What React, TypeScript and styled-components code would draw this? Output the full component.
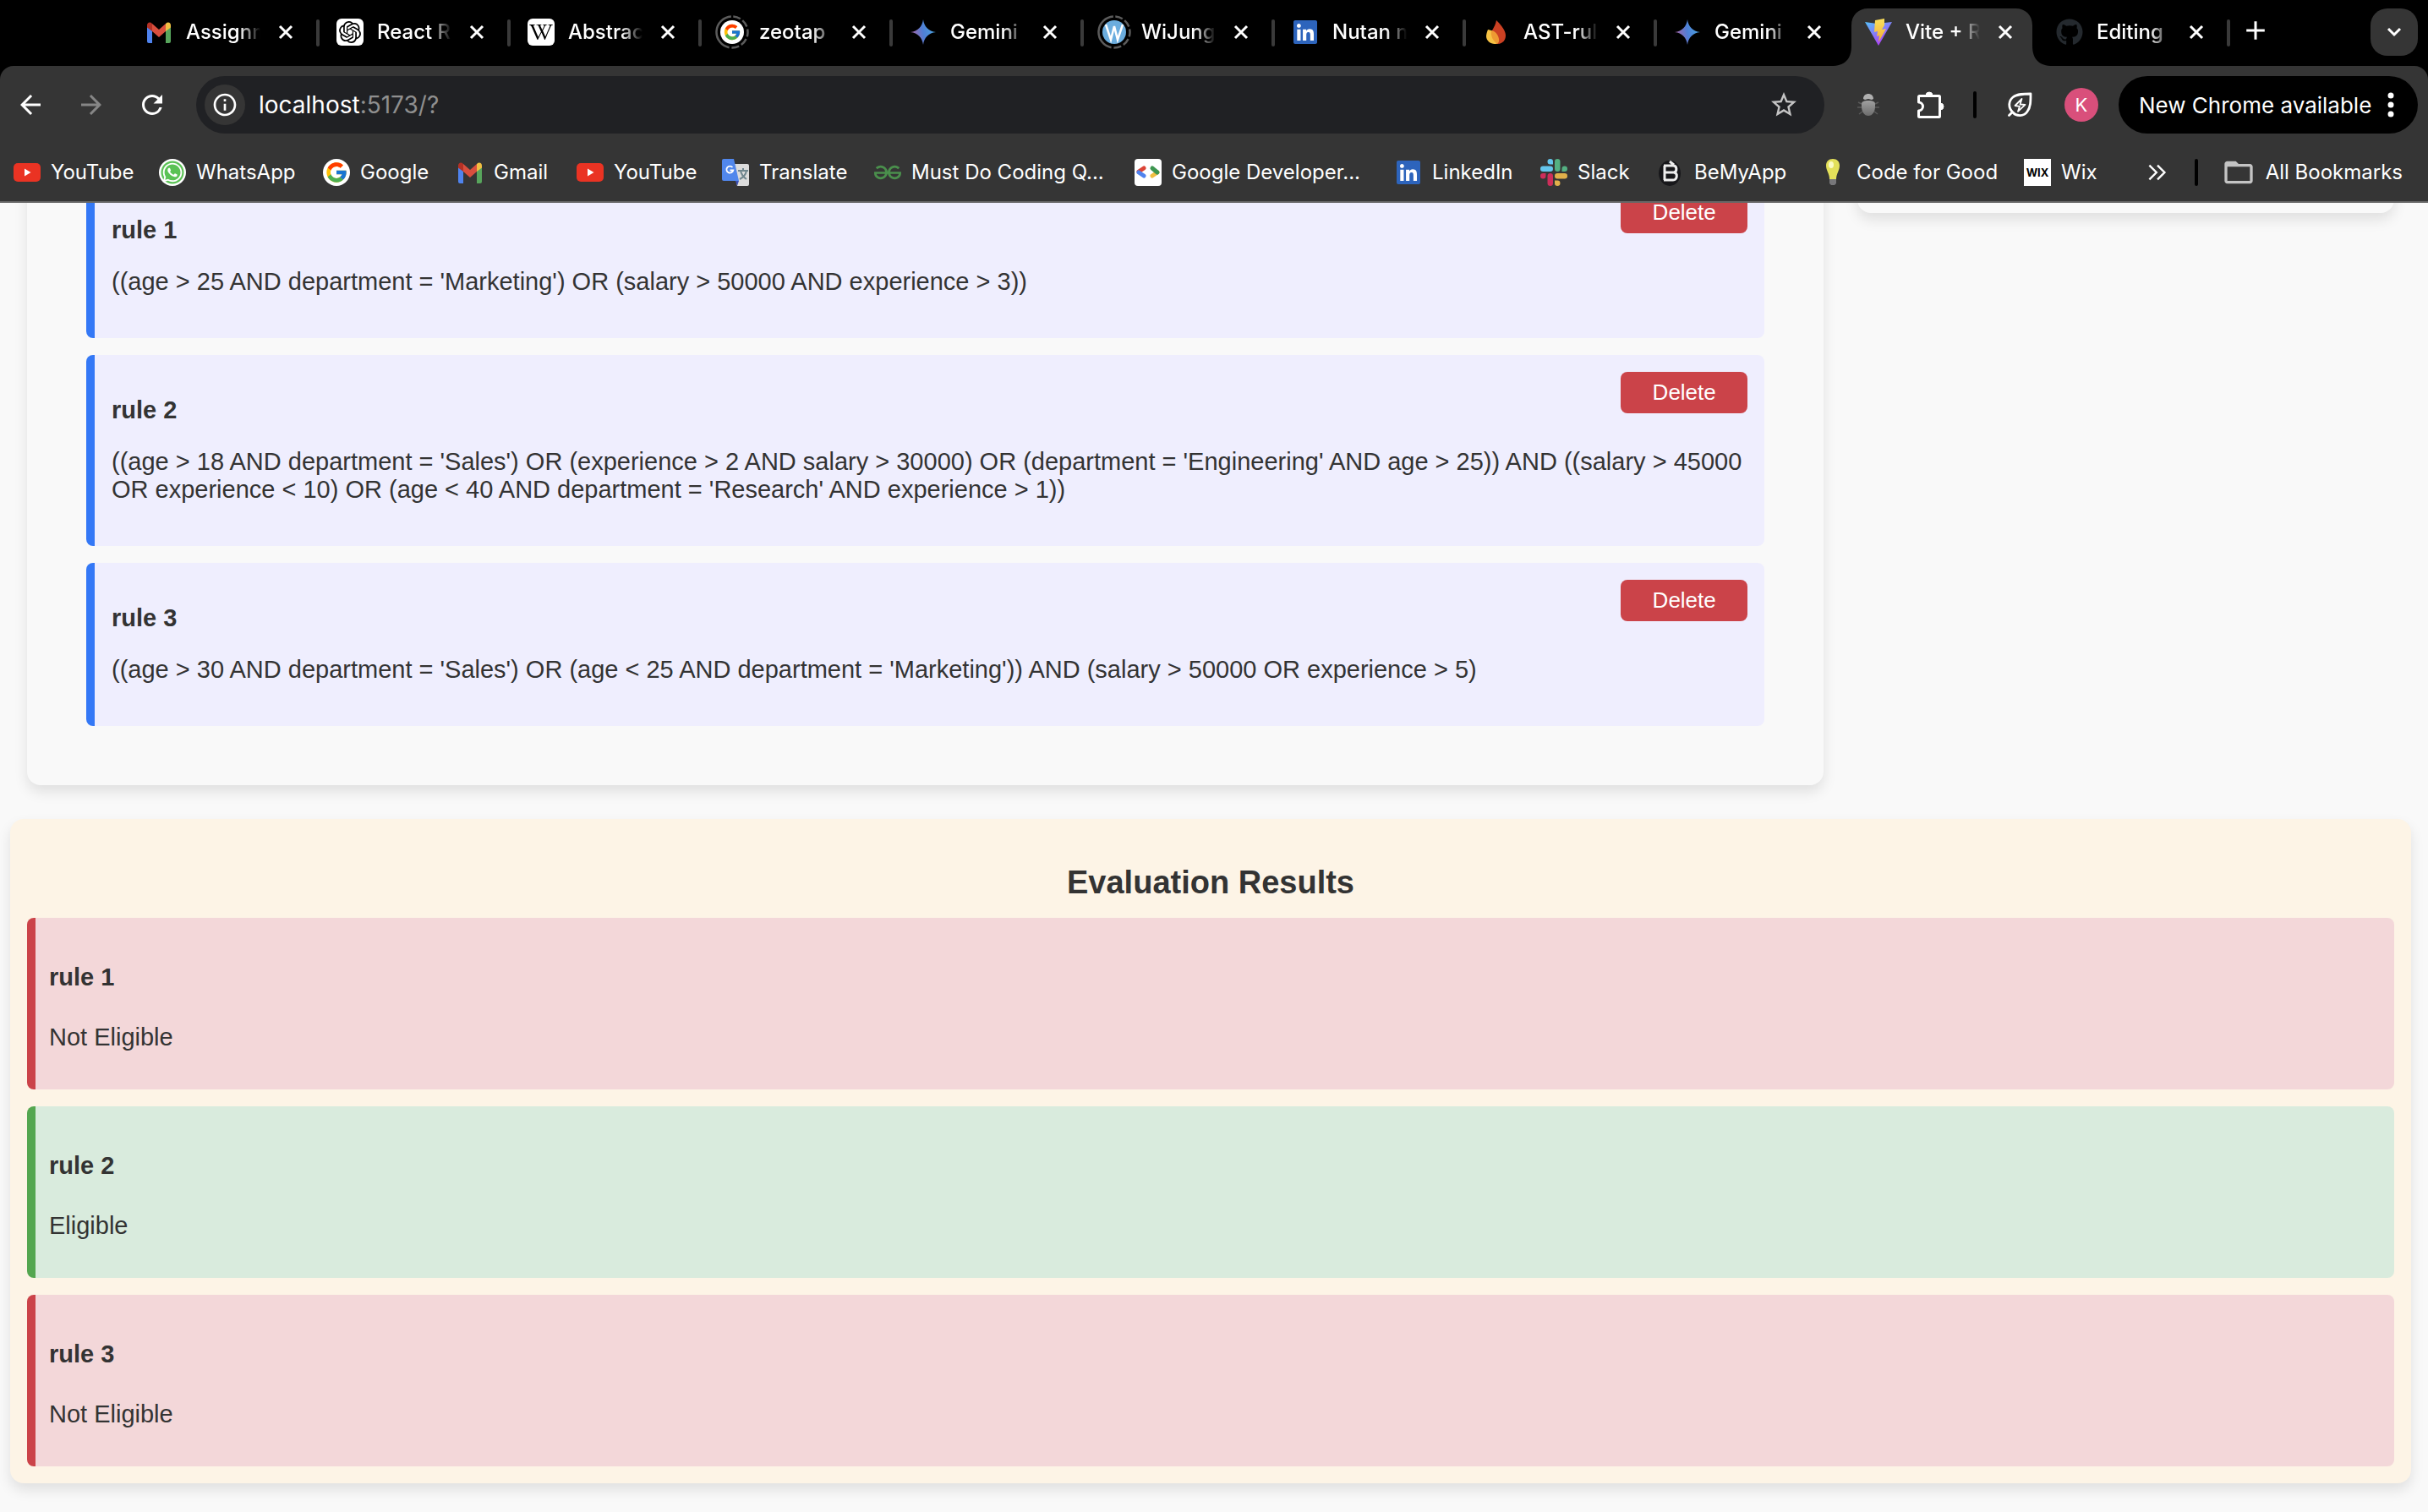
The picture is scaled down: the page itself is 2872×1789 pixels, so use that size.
import React, { useLayoutEffect, useRef } from "react";
import styled, { createGlobalStyle, css } from "styled-components";
import { FcGoogle } from "react-icons/fc";
import { SiOpenai, SiGeeksforgeeks } from "react-icons/si";
import { FaWikipediaW, FaLinkedin, FaGithub, FaWhatsapp } from "react-icons/fa";
import { MdStarBorder, MdRefresh, MdArrowBack, MdArrowForward, MdInfoOutline, MdFolderOpen } from "react-icons/md";

const UI = `Inter, "Liberation Sans", sans-serif`;
const PAGE = `"Liberation Sans", Arial, sans-serif`;

const Global = createGlobalStyle`
  *, *::before, *::after { box-sizing: border-box; }
  body { margin: 0; background: #f9f9f9; }
  button { border: 0; padding: 0; background: none; color: inherit; font: inherit; cursor: pointer; }
  h2, h3, p, ul { margin: 0; padding: 0; }
  svg { display: block; flex: none; }
`;

const Window = styled.div`
  display: flex;
  flex-direction: column;
  height: 100vh;
`;

/* ---------- browser frame ---------- */

const Frame = styled.header`
  flex: none;
  background: #000;
  color: #fff;
  font-family: ${UI};
  font-size: 24px;
  font-weight: 400;
`;

const TabStrip = styled.nav`
  display: flex;
  height: 78px;
  padding: 10px 12px 0 150px;
`;

const TabItem = styled.div<{ $line?: boolean }>`
  position: relative;
  display: flex;
  align-items: center;
  flex: 0 1 226px;
  min-width: 0;
  height: 68px;
  padding: 0 22px 12px;
  ${(p) =>
    p.$line &&
    css`
      &::after {
        content: "";
        position: absolute;
        right: -2px;
        top: 13px;
        width: 4px;
        height: 32px;
        border-radius: 2px;
        background: #3a3a3a;
      }
    `}
`;

const ActiveShape = styled.svg`
  position: absolute;
  left: -18px;
  top: 0;
  width: calc(100% + 36px);
  height: 68px;
`;

const TabLink = styled.a`
  position: relative;
  display: flex;
  align-items: center;
  gap: 16px;
  flex: 1;
  min-width: 0;
  color: inherit;
  font-weight: 500;
  text-decoration: none;
`;

const TabTitle = styled.span`
  width: 88px;
  overflow: hidden;
  white-space: nowrap;
  line-height: 32px;
  mask-image: linear-gradient(to right, #000 72%, transparent);
`;

const Cross = styled.button`
  position: relative;
  display: grid;
  place-items: center;
  width: 32px;
  height: 32px;
`;

const NewTab = styled.button`
  display: grid;
  place-items: center;
  width: 64px;
  height: 52px;
`;

const TabSearch = styled.button`
  display: grid;
  place-items: center;
  width: 56px;
  height: 56px;
  margin-left: auto;
  border-radius: 20px;
  background: #353535;
`;

const Toolbar = styled.div`
  background: #353535;
  border-bottom: 2px solid #666;
  border-radius: 16px 16px 0 0;
`;

const AddressRow = styled.div`
  display: flex;
  align-items: center;
  padding: 12px 12px 12px 0;
`;

const NavButton = styled.button<{ $dim?: boolean }>`
  display: grid;
  place-items: center;
  width: 72px;
  height: 56px;
  color: ${(p) => (p.$dim ? "#868686" : "#fff")};
`;

const Omnibox = styled.div`
  position: relative;
  display: flex;
  align-items: center;
  flex: 1;
  height: 68px;
  margin-left: 16px;
  padding: 0 30px 0 10px;
  border-radius: 34px;
  background: #202124;
`;

const SiteInfo = styled.button`
  display: grid;
  place-items: center;
  width: 48px;
  height: 48px;
  margin-right: 16px;
  border-radius: 24px;
  background: #353535;
`;

const Url = styled.a`
  flex: 1;
  color: #8f8f8f;
  font-size: 28px;
  line-height: 32px;
  text-decoration: none;
  b { color: #fff; font-weight: 400; }
`;

const Star = styled.button`
  color: #c4c4c4;
`;

const Tools = styled.div`
  display: flex;
  align-items: center;
  padding: 0 24px 0 28px;
`;

const ToolButton = styled.button<{ $w: number }>`
  display: grid;
  place-items: center;
  width: ${(p) => p.$w}px;
  height: 48px;
`;

const Bar = styled.span`
  flex: none;
  width: 4px;
  height: 32px;
  border-radius: 2px;
  background: #000;
`;

const Avatar = styled.button`
  width: 40px;
  height: 40px;
  border-radius: 20px;
  background: #d94f7b;
  font-size: 22px;
`;

const UpdatePill = styled.button`
  display: flex;
  align-items: center;
  justify-content: space-between;
  width: 354px;
  height: 68px;
  padding: 0 28px 0 24px;
  border-radius: 34px;
  background: #000;
  font-size: 26px;
  white-space: nowrap;
`;

const BookmarkBar = styled.nav`
  display: flex;
  align-items: center;
  height: 68px;
  padding: 0 30px 0 16px;
`;

const Bookmark = styled.a<{ $w?: number }>`
  display: flex;
  align-items: center;
  gap: 12px;
  flex: ${(p) => (p.$w ? `0 1 ${p.$w}px` : "none")};
  color: inherit;
  text-decoration: none;
  white-space: nowrap;
  line-height: 32px;
`;

const Overflow = styled.button`
  display: grid;
  place-items: center;
  width: 48px;
  height: 48px;
  margin: 0 20px 0 auto;
`;

const AllBookmarks = styled(Bookmark)`
  margin-left: 28px;
`;

const Tile = styled.span<{ $bg: string; $fg: string; $r?: number; $size?: number }>`
  display: grid;
  place-items: center;
  flex: none;
  width: 32px;
  height: 32px;
  border-radius: ${(p) => p.$r ?? 6}px;
  background: ${(p) => p.$bg};
  color: ${(p) => p.$fg};
  font-size: ${(p) => p.$size ?? 14}px;
  font-weight: 700;
`;

const LinkedInMark = styled(FaLinkedin)`
  width: 32px;
  height: 32px;
  color: #2d64bc;
  background: linear-gradient(#fff, #fff) center / 22px 22px no-repeat;
`;

const RingSvg = styled.svg`
  margin: 0 -4px;
`;

/* ---------- rule engine page ---------- */

const Viewport = styled.main`
  flex: 1;
  min-height: 0;
  overflow-y: auto;
  scrollbar-width: none;
  padding: 40px 20px 34px 12px;
  background: #f9f9f9;
  color: #333;
  font-family: ${PAGE};
  font-size: 29px;
  line-height: 33px;
`;

const Columns = styled.div`
  display: grid;
  grid-template-columns: 77fr 23fr;
  align-items: start;
  gap: 40px;
  padding: 0 20px;
  margin-bottom: 40px;
`;

const panel = css`
  border-radius: 16px;
  box-shadow: 0 8px 16px rgba(0, 0, 0, 0.1);
`;

const RulesPanel = styled.section`
  ${panel}
  display: grid;
  gap: 20px;
  padding: 70px;
`;

const SidePanel = styled.aside`
  ${panel}
  height: 115px;
`;

const RuleCard = styled.article`
  padding: 20px 20px 50px;
  border-left: 10px solid #3478f6;
  border-radius: 8px;
  background: #efeefe;
`;

const RuleHead = styled.div`
  display: flex;
  align-items: flex-start;
  justify-content: space-between;
`;

const RuleName = styled.h3`
  padding: 29px 0 28px;
  font-size: 29px;
  line-height: 33px;
`;

const DeleteButton = styled.button`
  width: 150px;
  height: 49px;
  border-radius: 8px;
  background: #cb4349;
  color: #fff;
  font-size: 26px;
`;

const Results = styled.section`
  ${panel}
  display: grid;
  gap: 20px;
  padding: 20px;
  background: #fdf4e6;
`;

const ResultsTitle = styled.h2`
  padding-top: 33px;
  font-size: 38px;
  line-height: 44px;
  text-align: center;
`;

const ResultCard = styled.article<{ $ok: boolean }>`
  padding: 54px 16px 45px;
  border-left: 10px solid ${(p) => (p.$ok ? "#54a650" : "#cb4349")};
  border-radius: 8px;
  background: ${(p) => (p.$ok ? "#d9ebdd" : "#f3d7d9")};
`;

const ResultName = styled.h3`
  padding-bottom: 38px;
  font-size: 29px;
  line-height: 33px;
`;

/* ---------- drawings ---------- */

const Gmail = () => (
  <svg width="32" height="32" viewBox="0 0 32 32">
    <path d="M2 8v19a2 2 0 0 0 2 2h4V14z" fill="#4f83ee" />
    <path d="M30 8v19a2 2 0 0 1-2 2h-4V14z" fill="#58a55c" />
    <path d="M24 6v9l6-4.500V8c0-3.500-3.500-4.500-6-2z" fill="#f1bf42" />
    <path d="M8 6v9l-6-4.500V8c0-3.500 3.500-4.500 6-2z" fill="#b43125" />
    <path d="M8 6l8 7 8-7v9l-8 7-8-7z" fill="#d94f3e" />
  </svg>
);

const YouTube = () => (
  <svg width="32" height="32" viewBox="0 0 32 32">
    <rect y="5" width="32" height="22" rx="5" fill="#ea3323" />
    <path d="M13 11.500v9l7.500-4.500z" fill="#fff" />
  </svg>
);

const Gemini = () => (
  <svg width="32" height="32" viewBox="0 0 32 32">
    <defs>
      <linearGradient id="gem" x1="0" y1="0.600" x2="1" y2="0.400">
        <stop offset="0.1" stopColor="#9a68ad" />
        <stop offset="0.5" stopColor="#4f7fd6" />
        <stop offset="1" stopColor="#4aa6e0" />
      </linearGradient>
    </defs>
    <path d="M16 1c1 8.500 6.500 14 15 15-8.500 1-14 6.500-15 15-1-8.500-6.500-14-15-15 8.500-1 14-6.500 15-15z" fill="url(#gem)" />
  </svg>
);

const Vite = () => (
  <svg width="32" height="32" viewBox="0 0 32 32">
    <defs>
      <linearGradient id="vp" x1="0" y1="0" x2="0.6" y2="1">
        <stop stopColor="#54c2fb" />
        <stop offset="1" stopColor="#b13bf7" />
      </linearGradient>
      <linearGradient id="vy" x1="0" y1="0" x2="0" y2="1">
        <stop stopColor="#fbe05c" />
        <stop offset="1" stopColor="#f3ab35" />
      </linearGradient>
    </defs>
    <path d="M0 4l14 2 18-2-16 28z" fill="url(#vp)" />
    <path d="M23 0L12 2l-1 14 4-1-1 6 3-1-1 8 9-16-5 1 3-5z" fill="url(#vy)" />
  </svg>
);

const Flame = () => (
  <svg width="32" height="32" viewBox="0 0 32 32">
    <path d="M16 2c7 7 11 13 11 18 0 6-4 10-10 10s-8-4-8-9c0-7 5-9 7-19z" fill="#cb4123" />
    <path d="M6 13c6 1 11 5 12 11 .500 4-1 6-4 6-5 0-10-4-10-9 0-3 1-5 2-8z" fill="#f6c244" />
    <path d="M10 14c5 1 8 5 9 10 .500 4-1 5-2 6-5-4-8-9-7-16z" fill="#ee9a33" />
  </svg>
);

const Ringed = ({ children }: { children: React.ReactNode }) => (
  <RingSvg width="40" height="40" viewBox="0 0 40 40">
    <circle cx="20" cy="20" r="18.500" fill="none" stroke="#5b5b5b" strokeWidth="2.500" strokeDasharray="9 3 9 3 9 3 9 3 9 3 53 3" transform="rotate(-86 20 20)" />
    {children}
  </RingSvg>
);

const Translate = () => (
  <svg width="32" height="32" viewBox="0 0 32 32">
    <path d="M12 6h18a2 2 0 0 1 2 2v22a2 2 0 0 1-2 2H18z" fill="#dcdcdc" />
    <path d="M19 14h12M25 11v3M22 14c1 5 4 8 7 10M29 14c-1 5-4 8-8 10" fill="none" stroke="#70878f" strokeWidth="2" />
    <path d="M2 0h12l6 26H2a2 2 0 0 1-2-2V2a2 2 0 0 1 2-2z" fill="#5187ec" />
    <path d="M16 26h4l-2 6z" fill="#3c50b5" />
    <path d="M12.500 10a4 4 0 1 0 .8 3.500H9.500" fill="none" stroke="#fff" strokeWidth="1.800" />
  </svg>
);

const GoogleDev = () => (
  <svg width="32" height="32" viewBox="0 0 32 32">
    <rect width="32" height="32" rx="4" fill="#fff" />
    <g strokeWidth="5" fill="none" strokeLinecap="round">
      <path d="M11 11l-6 4" stroke="#db4437" />
      <path d="M5 16l6 4" stroke="#4f83ee" />
      <path d="M21 20l6-4" stroke="#f1bf42" />
      <path d="M21 11l6 5" stroke="#3d9550" />
    </g>
  </svg>
);

const Slack = () => (
  <svg width="32" height="32" viewBox="0 0 32 32">
    <g fill="#64c5ec">
      <rect x="0" y="8.500" width="15" height="6.500" rx="3.250" />
      <path d="M15 6.500h-3.200A3.250 3.250 0 1 1 15 3.250z" />
    </g>
    <g fill="#54b082">
      <rect x="17" y="0" width="6.500" height="15" rx="3.250" />
      <path d="M25.500 15v-3.200A3.250 3.250 0 1 1 28.750 15z" />
    </g>
    <g fill="#e0b04a">
      <rect x="17" y="17" width="15" height="6.500" rx="3.250" />
      <path d="M17 25.500h3.200A3.250 3.250 0 1 1 17 28.750z" />
    </g>
    <g fill="#cd2e5a">
      <rect x="8.500" y="17" width="6.500" height="15" rx="3.250" />
      <path d="M6.500 17v3.200A3.250 3.250 0 1 1 3.250 17z" />
    </g>
  </svg>
);

const BeMy = () => (
  <svg width="32" height="32" viewBox="0 0 32 32">
    <ellipse cx="15" cy="17" rx="13" ry="15" fill="#17171a" />
    <path d="M8 8h11c5 0 5 7 1 8 5 1 4 9-1 9H8M9 8v17M9 16h12M15 3l5 4" fill="none" stroke="#eee" strokeWidth="3" />
  </svg>
);

const Bulb = () => (
  <svg width="32" height="32" viewBox="0 0 32 32">
    <path d="M16 0c5 0 8 3 8 8 0 6-4 9-4 16h-8c0-7-4-10-4-16 0-5 3-8 8-8z" fill="#e3e05a" />
    <ellipse cx="14" cy="7" rx="3" ry="4" fill="#fbfbc4" />
    <path d="M12 24h8v5l-2 2h-4l-2-2z" fill="#77777a" />
  </svg>
);

const Bug = () => (
  <svg width="32" height="32" viewBox="0 0 32 32">
    <defs>
      <linearGradient id="bug" x1="0" y1="0" x2="0" y2="1">
        <stop stopColor="#a0a0a0" />
        <stop offset="1" stopColor="#6c6c6c" />
      </linearGradient>
    </defs>
    <path d="M8 15l-4-2M24 15l4-2M8 19H3M24 19h5M9 24l-4 3M23 24l4 3" fill="none" stroke="#5a5a5a" strokeWidth="1.500" />
    <path d="M10 9c0-4 3-6 6-6s6 2 6 6l-2 1-4-1-4 1z" fill="#b0b0b0" />
    <path d="M8 15c0-3 3-4 8-4s8 1 8 4v3c0 6-3 11-8 11s-8-5-8-11z" fill="url(#bug)" />
  </svg>
);

const Puzzle = () => (
  <svg width="32" height="32" viewBox="0 0 32 32">
    <path
      d="M3 5.500h22.500a1 1 0 0 1 1 1v23a1 1 0 0 1-1 1H2.500a1 1 0 0 1-1-1v-6.500a5 5 0 0 0 0-10V6.500a1 1 0 0 1 1-1z"
      fill="none"
      stroke="#fff"
      strokeWidth="3"
      strokeLinejoin="round"
    />
    <path d="M10 5a4 4 0 0 1 8 0zM27 14a4 4 0 0 1 0 8z" fill="#fff" stroke="#fff" />
  </svg>
);

const Leaf = () => (
  <svg width="30" height="30" viewBox="0 0 30 30" fill="none" stroke="#fff" strokeLinejoin="round" strokeLinecap="round">
    <path d="M5.500 23.500C0 18 1 10 6 6c5-4 13-4 21-4 0 9 0 16-4 21-4 6-13 6-17.500 .5zM5.500 23.500l-4 4" strokeWidth="2.800" />
    <path d="M8.500 16l8-8-2 6.500 6 .3-8.500 8 2-6z" strokeWidth="1.800" />
  </svg>
);

const Stroke = ({ d, size = 20, w = 3 }: { d: string; size?: number; w?: number }) => (
  <svg width={size} height={size} viewBox="0 0 20 20" fill="none" stroke="currentColor" strokeWidth={w}>
    <path d={d} />
  </svg>
);

const Kebab = () => (
  <svg width="8" height="30" viewBox="0 0 8 30" fill="#fff">
    <circle cx="4" cy="4" r="3.500" />
    <circle cx="4" cy="15" r="3.500" />
    <circle cx="4" cy="26" r="3.500" />
  </svg>
);

/* ---------- data ---------- */

type Tab = { title: string; icon: React.ReactNode; line?: boolean; active?: boolean };

const tabs: Tab[] = [
  { title: "Assignm", icon: <Gmail />, line: true },
  { title: "React R", icon: <Tile $bg="#fff" $fg="#000"><SiOpenai size={26} /></Tile>, line: true },
  { title: "Abstrac", icon: <Tile $bg="#fff" $fg="#000"><FaWikipediaW size={28} /></Tile>, line: true },
  { title: "zeotap", icon: <Ringed><circle cx="20" cy="20" r="14" fill="#fff" /><FcGoogle x="9" y="9" size={22} /></Ringed>, line: true },
  { title: "Gemini", icon: <Gemini />, line: true },
  { title: "WiJung", icon: <Ringed><circle cx="20" cy="20" r="14" fill="#6badde" /><path d="M10 11l6 18 4-16 4 16 6-18" fill="none" stroke="#fff" strokeWidth="2.500" /></Ringed>, line: true },
  { title: "Nutan n", icon: <LinkedInMark />, line: true },
  { title: "AST-rul", icon: <Flame />, line: true },
  { title: "Gemini", icon: <Gemini /> },
  { title: "Vite + R", icon: <Vite />, active: true },
  { title: "Editing", icon: <FaGithub size={32} color="#24292e" />, line: true },
];

const bookmarks: { label: string; icon: React.ReactNode; w: number }[] = [
  { label: "YouTube", icon: <YouTube />, w: 172 },
  { label: "WhatsApp", icon: <Tile $bg="radial-gradient(#5bc255 0 13px, #fff 14px)" $fg="#fff" $r={16}><FaWhatsapp size={26} /></Tile>, w: 194 },
  { label: "Google", icon: <Tile $bg="#fff" $fg="#000" $r={16}><FcGoogle size={28} /></Tile>, w: 158 },
  { label: "Gmail", icon: <Gmail />, w: 142 },
  { label: "YouTube", icon: <YouTube />, w: 172 },
  { label: "Translate", icon: <Translate />, w: 180 },
  { label: "Must Do Coding Q...", icon: <SiGeeksforgeeks size={32} color="#4a8f4c" />, w: 308 },
  { label: "Google Developer...", icon: <GoogleDev />, w: 308 },
  { label: "LinkedIn", icon: <LinkedInMark />, w: 172 },
  { label: "Slack", icon: <Slack />, w: 138 },
  { label: "BeMyApp", icon: <BeMy />, w: 192 },
  { label: "Code for Good", icon: <Bulb />, w: 242 },
  { label: "Wix", icon: <Tile $bg="#fff" $fg="#000" $r={0} $size={13}>WIX</Tile>, w: 88 },
];

const rules = [
  { name: "rule 1", text: "((age > 25 AND department = 'Marketing') OR (salary > 50000 AND experience > 3))", ok: false },
  {
    name: "rule 2",
    text: "((age > 18 AND department = 'Sales') OR (experience > 2 AND salary > 30000) OR (department = 'Engineering' AND age > 25)) AND ((salary > 45000 OR experience < 10) OR (age < 40 AND department = 'Research' AND experience > 1))",
    ok: true,
  },
  { name: "rule 3", text: "((age > 30 AND department = 'Sales') OR (age < 25 AND department = 'Marketing')) AND (salary > 50000 OR experience > 5)", ok: false },
];

export default function App() {
  const view = useRef<HTMLElement>(null);

  // The latest results sit at the end of the page, so open it scrolled down.
  useLayoutEffect(() => {
    if (view.current) view.current.scrollTop = view.current.scrollHeight;
  }, []);

  return (
    <Window>
      <Global />
      <Frame>
        <TabStrip>
          {tabs.map((t, i) => (
            <TabItem key={i} $line={t.line}>
              {t.active && (
                <ActiveShape viewBox="0 0 262 68" preserveAspectRatio="none" fill="#353535">
                  <path d="M0 68c16 0 24-8 24-24V20C24 8 32 0 44 0h174c12 0 20 8 20 20v24c0 16 8 24 24 24z" />
                </ActiveShape>
              )}
              <TabLink href="#">
                {t.icon}
                <TabTitle>{t.title}</TabTitle>
              </TabLink>
              <Cross aria-label="Close tab">
                <Stroke size={20} d="M3 3l14 14M17 3L3 17" />
              </Cross>
            </TabItem>
          ))}
          <NewTab aria-label="New tab">
            <Stroke size={24} d="M10 1v18M1 10h18" w={2.5} />
          </NewTab>
          <TabSearch aria-label="Search tabs">
            <Stroke size={20} d="M3 6l7 7 7-7" />
          </TabSearch>
        </TabStrip>
        <Toolbar>
          <AddressRow>
            <NavButton aria-label="Back"><MdArrowBack size={36} /></NavButton>
            <NavButton aria-label="Forward" $dim><MdArrowForward size={36} /></NavButton>
            <NavButton aria-label="Reload"><MdRefresh size={36} /></NavButton>
            <Omnibox>
              <SiteInfo aria-label="Site information"><MdInfoOutline size={32} /></SiteInfo>
              <Url href="#"><b>localhost</b>:5173/?</Url>
              <Star aria-label="Bookmark this page"><MdStarBorder size={36} /></Star>
            </Omnibox>
            <Tools>
              <ToolButton aria-label="Debugger" $w={48}><Bug /></ToolButton>
              <ToolButton aria-label="Extensions" $w={100}><Puzzle /></ToolButton>
              <Bar />
              <ToolButton aria-label="Energy saver" $w={104}><Leaf /></ToolButton>
              <Avatar aria-label="Profile K">K</Avatar>
            </Tools>
            <UpdatePill>
              New Chrome available
              <Kebab />
            </UpdatePill>
          </AddressRow>
          <BookmarkBar>
            {bookmarks.map((b, i) => (
              <Bookmark key={i} href="#" $w={b.w}>
                {b.icon}
                {b.label}
              </Bookmark>
            ))}
            <Overflow aria-label="More bookmarks">
              <Stroke size={24} d="M2 3l7 7-7 7M10 3l7 7-7 7" w={2} />
            </Overflow>
            <Bar />
            <AllBookmarks href="#">
              <MdFolderOpen size={40} color="#c4c4c4" />
              All Bookmarks
            </AllBookmarks>
          </BookmarkBar>
        </Toolbar>
      </Frame>
      <Viewport ref={view}>
        <Columns>
          <RulesPanel>
            {rules.map((r) => (
              <RuleCard key={r.name}>
                <RuleHead>
                  <RuleName>{r.name}</RuleName>
                  <DeleteButton>Delete</DeleteButton>
                </RuleHead>
                <p>{r.text}</p>
              </RuleCard>
            ))}
          </RulesPanel>
          <SidePanel />
        </Columns>
        <Results>
          <ResultsTitle>Evaluation Results</ResultsTitle>
          {rules.map((r) => (
            <ResultCard key={r.name} $ok={r.ok}>
              <ResultName>{r.name}</ResultName>
              <p>{r.ok ? "Eligible" : "Not Eligible"}</p>
            </ResultCard>
          ))}
        </Results>
      </Viewport>
    </Window>
  );
}
